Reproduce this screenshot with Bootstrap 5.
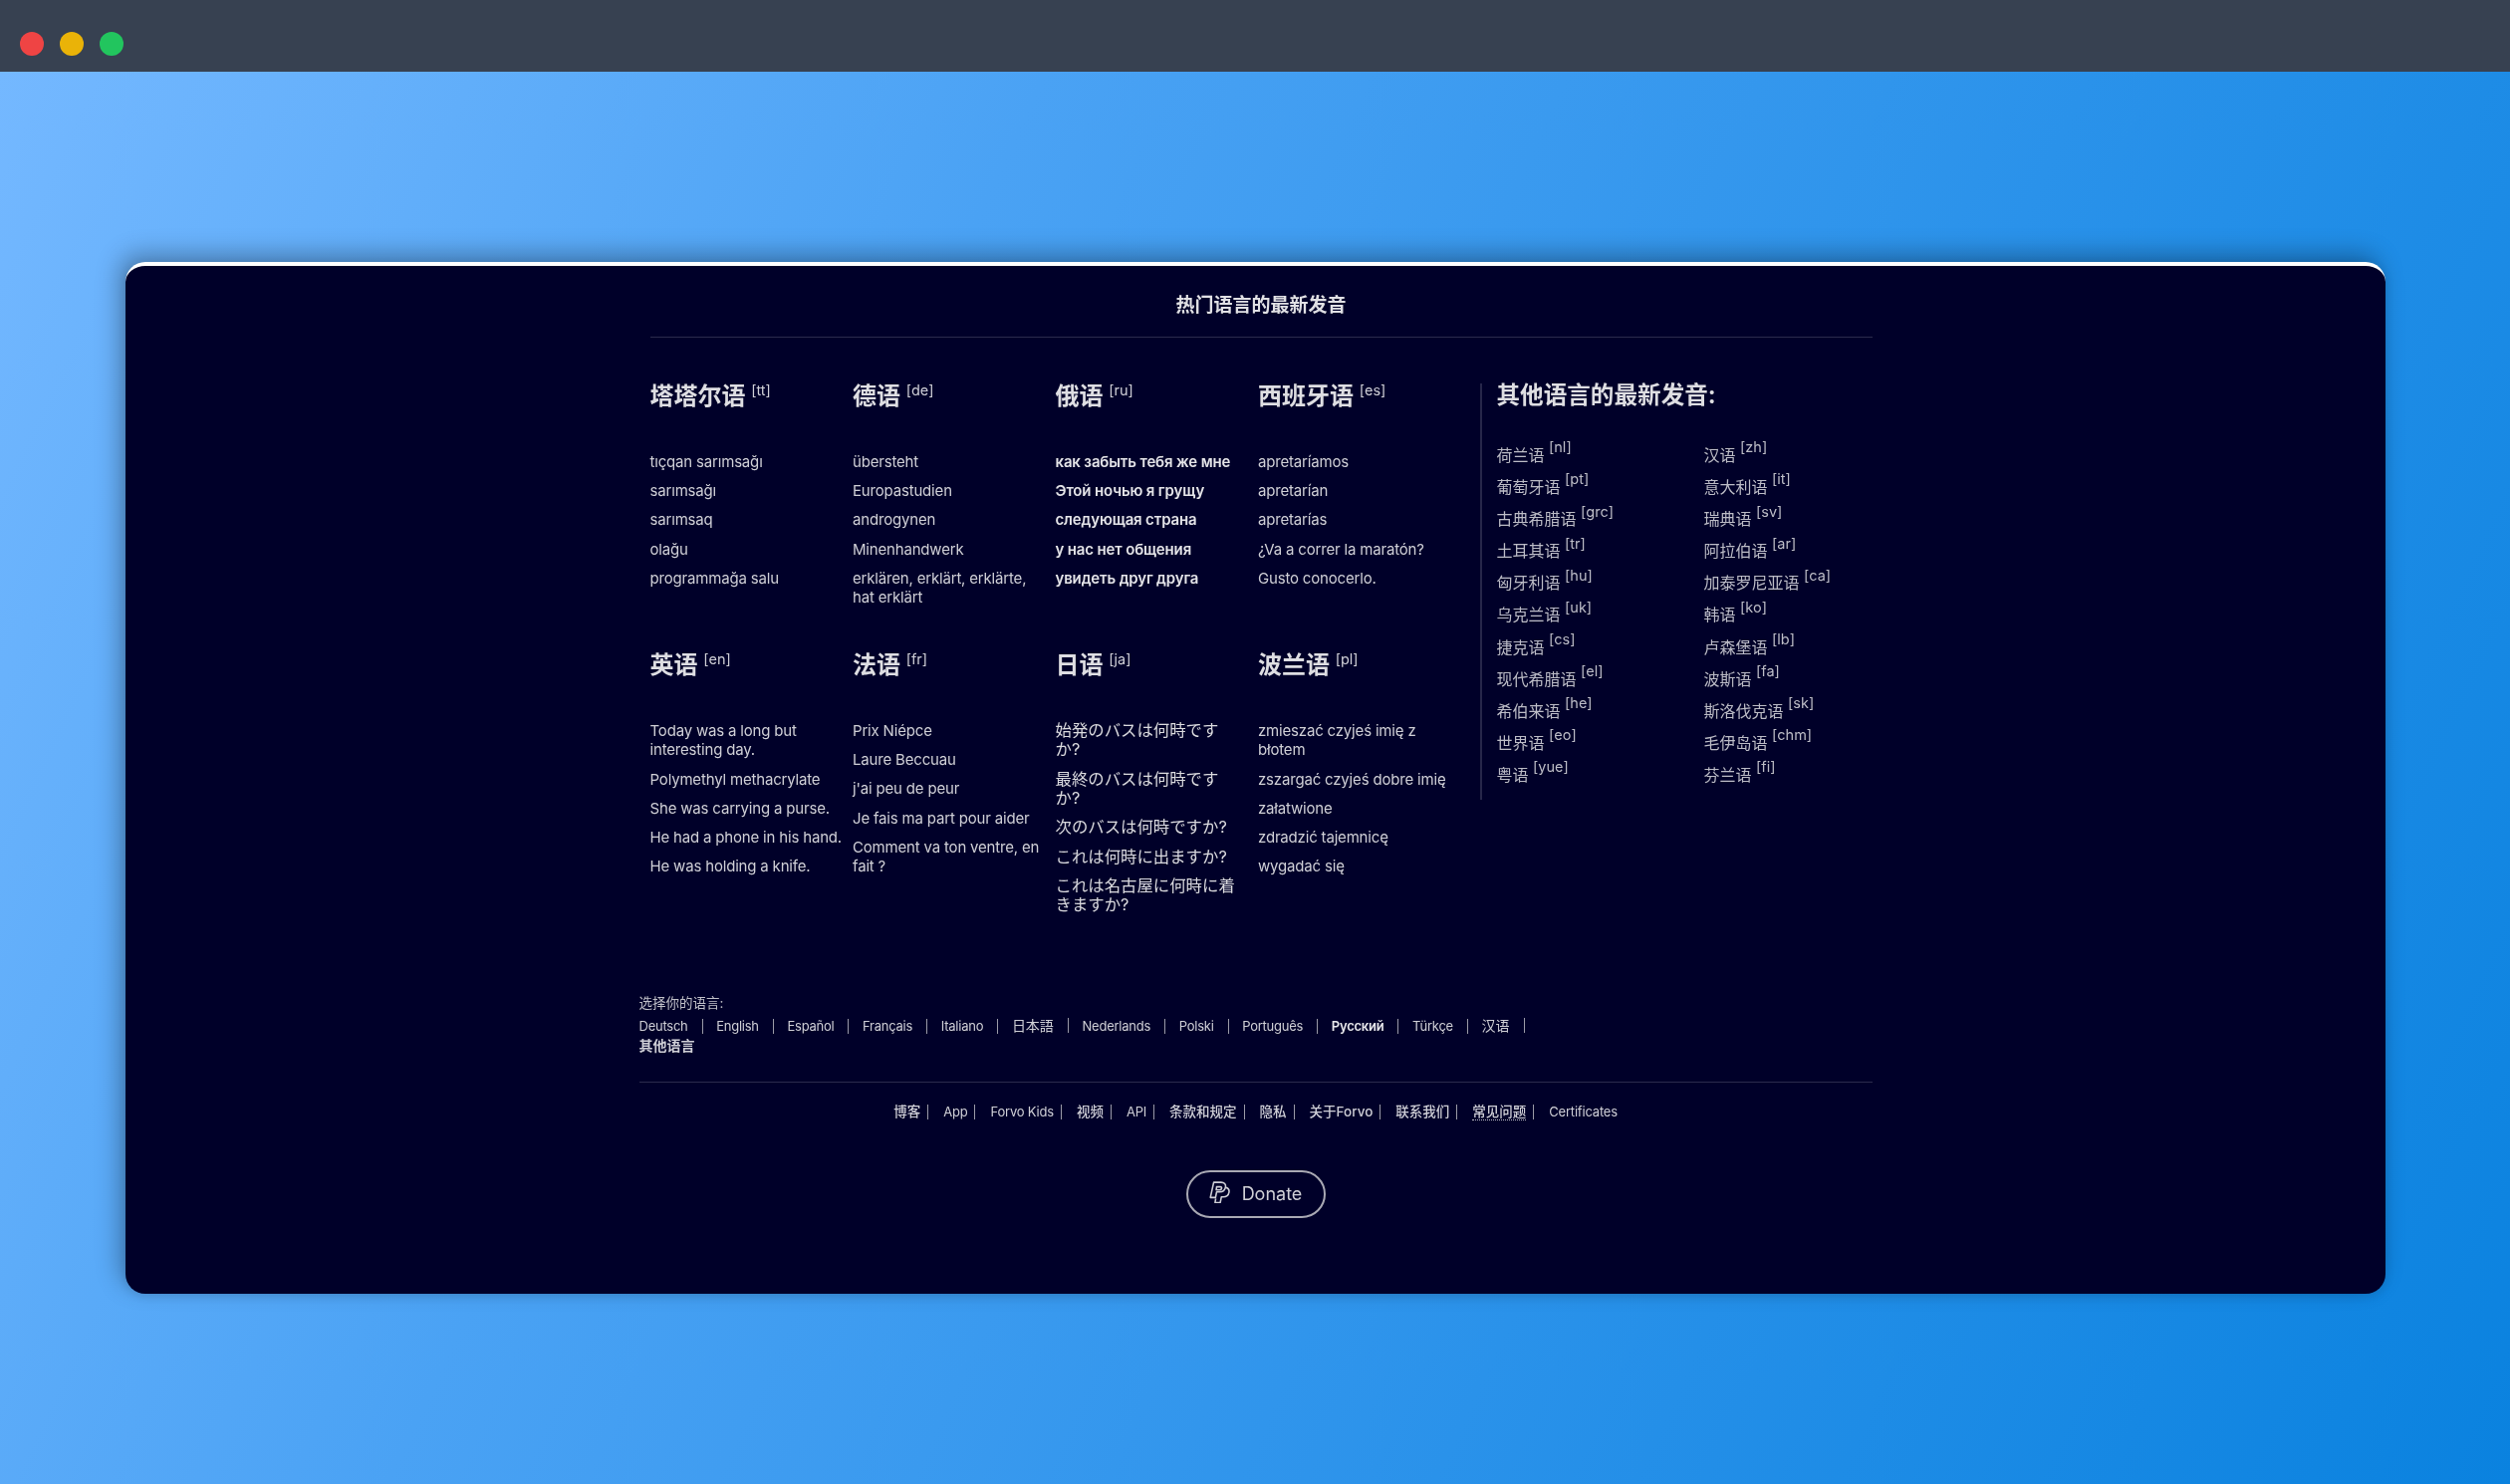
<!DOCTYPE html>
<html lang="zh-Hans">
<head>
<meta charset="utf-8">
<title>Forvo</title>
<link href="https://cdn.jsdelivr.net/npm/bootstrap@5.3.0/dist/css/bootstrap.min.css" rel="stylesheet">
<style>
html,body{height:100%;margin:0}
body{font-family:Inter,"Noto Sans CJK SC",sans-serif;background:#374151;color:#cfcfd6;overflow:hidden}
.title-bar{height:72px;background:#374151;padding:32px 0 0 20px;gap:16px}
.win-dot{width:24px;height:24px;border-radius:50%}
.stage{height:1418px;background:linear-gradient(115deg,#74b8ff 0%,#4aa2f4 33%,#2a92ea 66%,#0a82df 100%)}
.sheet{width:2269px;margin-left:1px;background:#000029;border-top:4px solid #fff;border-radius:20px;box-shadow:-6px -8px 24px rgba(0,0,0,.3),0 2px 10px rgba(0,0,0,.1);padding-bottom:76.4px}
.sheet-inner{width:1238px;margin:0 auto;filter:blur(.5px)}
.hot-block{margin-left:11px}
.hot-title{font-size:19px;line-height:28px;font-weight:700;text-align:center;color:#e0e0e4;padding-top:26px;padding-bottom:17px;border-bottom:1px solid #2b2b4c;margin:0}
.hot-grid{width:814px;padding-top:42.6px;flex:none}
.lang-name{font-size:24px;line-height:32px;font-weight:700;color:#dedee2;margin:0 0 40px}
sup{font-size:14.5px;font-weight:400;top:-.6em}
.lang-name sup{color:#cfcfd6}
.word-list{list-style:none;padding:0;margin:0 0 42px;width:198px;font-size:15px;line-height:19.5px;letter-spacing:-.18px}
.word-list li{margin-bottom:9.8px}
.word-list.strong{font-weight:600;color:#e4e4e8;letter-spacing:-.15px}
.word-list.ja-list{font-family:Inter,"Noto Sans CJK JP",sans-serif;font-size:16.4px;width:190px;letter-spacing:0;color:#dadade}
.other-block{margin-left:19px;margin-top:46px;padding-left:15px;padding-bottom:8px;border-left:2px solid #26264a;width:394px;height:418px;flex:none}
.other-title{font-size:23.6px;line-height:24px;font-weight:700;color:#dedee2;margin:0 0 32px}
.other-list{list-style:none;padding:0;margin:0;width:208px;flex:none;font-size:16px;line-height:32.1px;color:#bcbcc6}
.pick-label{font-size:13.5px;line-height:20px;margin-top:35.6px;margin-bottom:3px;color:#c0c0c8}
.pick-row{line-height:20px;font-size:13px;letter-spacing:-.25px}
.pick-row a,.foot-row a{color:#cfcfd6;text-decoration:none}
.pick-item{display:inline-block;line-height:15px;padding-right:14px;border-right:1px solid #9a9aa8;margin-right:13.7px}
.pick-row a.pick-cjk{font-weight:700;font-size:14px;letter-spacing:0}
.pick-ru a{font-weight:600;color:#e8e8ec}
.pick-row .plain{font-size:14px;letter-spacing:0}
.foot-wrap{border-top:1px solid #2b2b4c;margin-top:26px;padding-top:19.4px;height:41px}
.foot-row{font-size:13px;line-height:20px;letter-spacing:-.2px}
.foot-item{display:inline-block;line-height:15px;padding-right:7px;border-right:1px solid #9a9aa8;margin-right:15px}
.foot-item:last-child{border:0;margin:0;padding:0}
.foot-cjk{font-weight:500;font-size:13.5px;letter-spacing:0}
.foot-row a.dotted{border-bottom:1px dotted #bcbcc6}
.donate-btn{margin-top:48px;width:140px;height:48px;border:2px solid #a9a9b4;border-radius:24px;color:#cfcfd6;font-size:18px;gap:12px;text-decoration:none;background:transparent}
</style>
</head>
<body>
<div class="title-bar d-flex align-items-start">
  <span class="win-dot" style="background:#ef4444"></span>
  <span class="win-dot" style="background:#eab308"></span>
  <span class="win-dot" style="background:#22c55e"></span>
</div>
<main class="stage d-flex align-items-center justify-content-center">
  <section class="sheet">
    <div class="sheet-inner">
      <div class="hot-block">
        <h2 class="hot-title">热门语言的最新发音</h2>
        <div class="d-flex align-items-start">
          <div class="row g-0 hot-grid">
            <div class="col-3"><h3 class="lang-name">塔塔尔语 <sup>[tt]</sup></h3>
              <ul class="word-list"><li>tıçqan sarımsağı</li><li>sarımsağı</li><li>sarımsaq</li><li>olağu</li><li>programmağa salu</li></ul></div>
            <div class="col-3"><h3 class="lang-name">德语 <sup>[de]</sup></h3>
              <ul class="word-list"><li>übersteht</li><li>Europastudien</li><li>androgynen</li><li>Minenhandwerk</li><li>erklären, erklärt, erklärte,<br>hat erklärt</li></ul></div>
            <div class="col-3"><h3 class="lang-name">俄语 <sup>[ru]</sup></h3>
              <ul class="word-list strong"><li>как забыть тебя же мне</li><li>Этой ночью я грущу</li><li>следующая страна</li><li>у нас нет общения</li><li>увидеть друг друга</li></ul></div>
            <div class="col-3"><h3 class="lang-name">西班牙语 <sup>[es]</sup></h3>
              <ul class="word-list"><li>apretaríamos</li><li>apretarían</li><li>apretarías</li><li>¿Va a correr la maratón?</li><li>Gusto conocerlo.</li></ul></div>
            <div class="col-3"><h3 class="lang-name">英语 <sup>[en]</sup></h3>
              <ul class="word-list"><li>Today was a long but interesting day.</li><li>Polymethyl methacrylate</li><li>She was carrying a purse.</li><li>He had a phone in his hand.</li><li>He was holding a knife.</li></ul></div>
            <div class="col-3"><h3 class="lang-name">法语 <sup>[fr]</sup></h3>
              <ul class="word-list"><li>Prix Niépce</li><li>Laure Beccuau</li><li>j'ai peu de peur</li><li>Je fais ma part pour aider</li><li>Comment va ton ventre, en fait ?</li></ul></div>
            <div class="col-3"><h3 class="lang-name">日语 <sup>[ja]</sup></h3>
              <ul class="word-list ja-list" lang="ja"><li>始発のバスは何時です<br>か?</li><li>最終のバスは何時です<br>か?</li><li>次のバスは何時ですか?</li><li>これは何時に出ますか?</li><li>これは名古屋に何時に着<br>きますか?</li></ul></div>
            <div class="col-3"><h3 class="lang-name">波兰语 <sup>[pl]</sup></h3>
              <ul class="word-list"><li>zmieszać czyjeś imię z błotem</li><li>zszargać czyjeś dobre imię</li><li>załatwione</li><li>zdradzić tajemnicę</li><li>wygadać się</li></ul></div>
          </div>
          <aside class="other-block">
            <h3 class="other-title">其他语言的最新发音:</h3>
            <div class="d-flex">
              <ul class="other-list">
                <li>荷兰语 <sup>[nl]</sup></li><li>葡萄牙语 <sup>[pt]</sup></li><li>古典希腊语 <sup>[grc]</sup></li><li>土耳其语 <sup>[tr]</sup></li><li>匈牙利语 <sup>[hu]</sup></li><li>乌克兰语 <sup>[uk]</sup></li><li>捷克语 <sup>[cs]</sup></li><li>现代希腊语 <sup>[el]</sup></li><li>希伯来语 <sup>[he]</sup></li><li>世界语 <sup>[eo]</sup></li><li>粤语 <sup>[yue]</sup></li>
              </ul>
              <ul class="other-list">
                <li>汉语 <sup>[zh]</sup></li><li>意大利语 <sup>[it]</sup></li><li>瑞典语 <sup>[sv]</sup></li><li>阿拉伯语 <sup>[ar]</sup></li><li>加泰罗尼亚语 <sup>[ca]</sup></li><li>韩语 <sup>[ko]</sup></li><li>卢森堡语 <sup>[lb]</sup></li><li>波斯语 <sup>[fa]</sup></li><li>斯洛伐克语 <sup>[sk]</sup></li><li>毛伊岛语 <sup>[chm]</sup></li><li>芬兰语 <sup>[fi]</sup></li>
              </ul>
            </div>
          </aside>
        </div>
      </div>
      <div class="pick-label">选择你的语言:</div>
      <div class="pick-row">
        <span class="pick-item"><a href="#">Deutsch</a></span><span class="pick-item"><a href="#">English</a></span><span class="pick-item"><a href="#">Español</a></span><span class="pick-item"><a href="#">Français</a></span><span class="pick-item"><a href="#">Italiano</a></span><span class="pick-item plain"><a href="#" lang="ja">日本語</a></span><span class="pick-item"><a href="#">Nederlands</a></span><span class="pick-item"><a href="#">Polski</a></span><span class="pick-item"><a href="#">Português</a></span><span class="pick-item pick-ru"><a href="#">Русский</a></span><span class="pick-item"><a href="#">Türkçe</a></span><span class="pick-item plain"><a href="#">汉语</a></span><br>
        <a href="#" class="pick-cjk">其他语言</a>
      </div>
      <div class="foot-wrap">
        <div class="foot-row text-center">
          <span class="foot-item foot-cjk"><a href="#">博客</a></span><span class="foot-item"><a href="#">App</a></span><span class="foot-item"><a href="#">Forvo Kids</a></span><span class="foot-item foot-cjk"><a href="#">视频</a></span><span class="foot-item"><a href="#">API</a></span><span class="foot-item foot-cjk"><a href="#">条款和规定</a></span><span class="foot-item foot-cjk"><a href="#">隐私</a></span><span class="foot-item foot-cjk"><a href="#">关于Forvo</a></span><span class="foot-item foot-cjk"><a href="#">联系我们</a></span><span class="foot-item foot-cjk"><a href="#" class="dotted">常见问题</a></span><span class="foot-item"><a href="#">Certificates</a></span>
        </div>
      </div>
      <div class="d-flex justify-content-center">
        <a href="#" class="donate-btn d-flex align-items-center justify-content-center">
          <svg class="mb-1" width="21" height="22" viewBox="2 .5 18.5 19.5" fill="none" stroke="#cfcfd6" stroke-width="1.4" stroke-linejoin="round"><path d="M6 1.5h6.5c3 0 4.5 1.8 4 4.2-.5 2.8-2.6 4.3-5.3 4.3H8.6L7.6 15H3z"/><path d="M8.6 5.5h3.2c1 0 1.4.6 1.2 1.4-.2.9-.9 1.4-1.8 1.4H8.2z"/><path d="M17 6c2 .8 3 2.2 2.6 4.3-.5 2.7-2.6 4.2-5.2 4.2h-1.6l-1 5H7.2l.6-3.5"/></svg>
          <span>Donate</span>
        </a>
      </div>
    </div>
  </section>
</main>
</body>
</html>
